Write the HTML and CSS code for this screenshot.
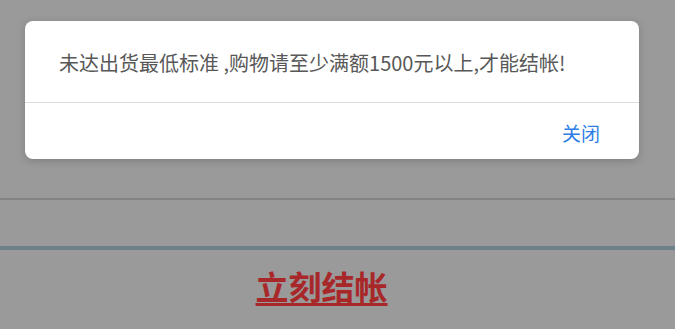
FILE: index.html
```html
<!DOCTYPE html>
<html lang="zh-CN">
<head>
<meta charset="utf-8">
<link rel="stylesheet" href="styles.css">
</head>
<body>
<div class="page">
  <div class="top-space"></div>
  <div class="rule-gray"></div>
  <div class="mid-space"></div>
  <div class="rule-blue"></div>
  <div class="checkout-row">
    <a class="checkout" href="#">立刻结帐</a>
  </div>
</div>
<div class="dialog">
  <div class="dialog-body">未达出货最低标准 ,购物请至少满额1500元以上,才能结帐!</div>
  <div class="dialog-footer">
    <span class="dialog-btn">关闭</span>
  </div>
</div>
</body>
</html>
```
FILE: styles.css
```css
html, body {
  margin: 0;
  padding: 0;
}
body {
  background: #9a9a9a;
  width: 675px;
  height: 329px;
  overflow: hidden;
  font-family: "Noto Sans CJK SC", "Noto Sans", sans-serif;
}
.page {
  display: flex;
  flex-direction: column;
}
.top-space {
  height: 198px;
}
.rule-gray {
  height: 2px;
  background: #828282;
}
.mid-space {
  height: 46px;
}
.rule-blue {
  height: 4px;
  background: #6f8188;
}
.checkout-row {
  display: flex;
  justify-content: center;
  padding-top: 16px;
  padding-right: 32px;
}
.checkout {
  font-size: 33px;
  font-weight: bold;
  color: #a8282a;
  text-decoration: underline;
  text-underline-offset: 3px;
  line-height: 40px;
}
.dialog {
  position: absolute;
  left: 25px;
  top: 21px;
  width: 614px;
  height: 138px;
  background: #fff;
  border-radius: 8px;
  box-shadow: 0 2px 8px rgba(0, 0, 0, 0.18);
  display: flex;
  flex-direction: column;
}
.dialog-body {
  height: 82px;
  border-bottom: 1px solid #dcdcdc;
  box-sizing: border-box;
  padding: 2px 0 0 34px;
  display: flex;
  align-items: center;
  font-size: 20px;
  color: #585858;
  white-space: nowrap;
}
.dialog-footer {
  flex: 1;
  display: flex;
  justify-content: flex-end;
  align-items: center;
  padding-right: 39px;
  padding-top: 2px;
}
.dialog-btn {
  font-size: 19px;
  color: #2d7de6;
}
```
